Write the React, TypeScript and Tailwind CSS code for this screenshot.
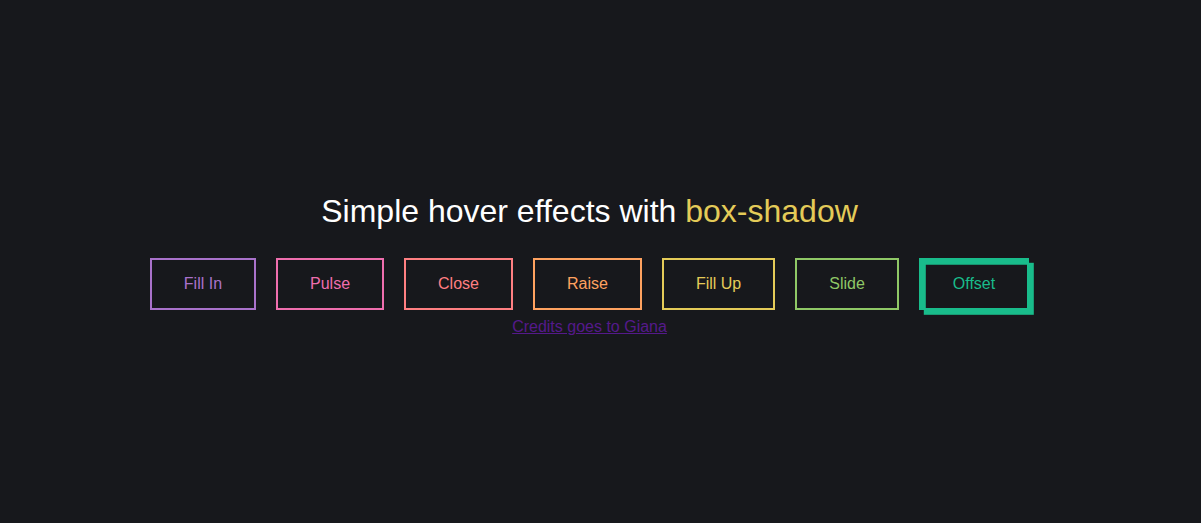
import React from "react";

const buttons: { label: string; cls: string }[] = [
  { label: "Fill In", cls: "border-[#a972cb] text-[#a972cb]" },
  { label: "Pulse", cls: "border-[#ef6eae] text-[#ef6eae]" },
  { label: "Close", cls: "border-[#ff7f82] text-[#ff7f82]" },
  { label: "Raise", cls: "border-[#ffa260] text-[#ffa260]" },
  { label: "Fill Up", cls: "border-[#e4cb58] text-[#e4cb58]" },
  { label: "Slide", cls: "border-[#8fc866] text-[#8fc866]" },
  {
    label: "Offset",
    cls: "border-[#19bc8b] text-[#19bc8b] shadow-[4.8px_4.8px_0_0_#19bc8b,inset_4.8px_4.8px_0_0_#19bc8b]",
  },
];

export default function App() {
  return (
    <div
      className="w-full h-[523px] bg-[#17181c] overflow-hidden"
      style={{ fontFamily: '"Liberation Sans", Arial, Helvetica, sans-serif' }}
    >
      <div className="w-[1179px] flex flex-col items-center pt-[193px] text-center text-white">
        <h1 className="text-[32px] leading-[37px] font-normal m-0">
          Simple hover effects with <span className="text-[#e4cb58]">box-shadow</span>
        </h1>
        <div className="flex items-center mt-[20px] gap-[4px]">
          {buttons.map((b) => (
            <button
              key={b.label}
              className={`m-2 border-2 bg-transparent px-8 py-4 text-[16px] leading-none ${b.cls}`}
            >
              {b.label}
            </button>
          ))}
        </div>
        <a href="#" className="text-[16px] leading-[18px] text-[#551a8b] underline">
          Credits goes to Giana
        </a>
      </div>
    </div>
  );
}
